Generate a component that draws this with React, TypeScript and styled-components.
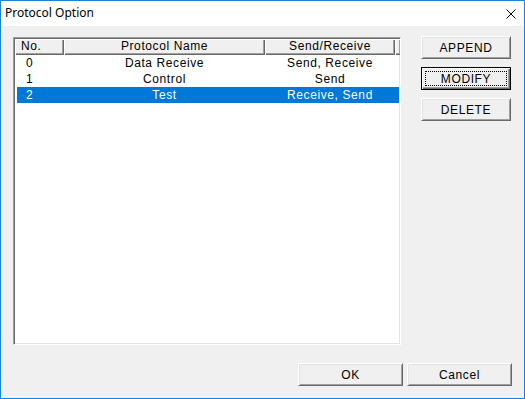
import React from 'react'
import styled, { createGlobalStyle } from 'styled-components'

const GlobalStyle = createGlobalStyle`
  html, body {
    margin: 0;
    padding: 0;
    background: #f0f0f0;
  }
`

const columns = [
  { key: 'no', title: 'No.', width: 49, align: 'left' },
  { key: 'name', title: 'Protocol Name', width: 201, align: 'center' },
  { key: 'dir', title: 'Send/Receive', width: 130, align: 'center' },
]

const rows = [
  { no: '0', name: 'Data Receive', dir: 'Send, Receive' },
  { no: '1', name: 'Control', dir: 'Send' },
  { no: '2', name: 'Test', dir: 'Receive, Send' },
]

const selectedRow = 2

const App = () => {
  return (
    <>
      <GlobalStyle />
      <Window>
        <TitleBar>
          <Title>Protocol Option</Title>
          <CloseIcon width="10" height="10" viewBox="0 0 10 10">
            <path d="M0.5 0.5 L9.5 9.5 M9.5 0.5 L0.5 9.5" stroke="#000" strokeWidth="1" />
          </CloseIcon>
        </TitleBar>
        <Body>
          <TopRow>
            <ListView>
              <Header>
                {columns.map((col) => (
                  <HeaderCell key={col.key} $width={col.width} $align={col.align}>
                    {col.title}
                  </HeaderCell>
                ))}
                <HeaderCell $width={6} $align="left" />
              </Header>
              <Rows>
                {rows.map((row, index) => (
                  <Row key={row.no} $selected={index === selectedRow}>
                    {columns.map((col, ci) => (
                      <Cell
                        key={col.key}
                        $width={ci === 0 ? col.width - 2 : col.width}
                        $align={col.align}
                      >
                        {row[col.key as keyof typeof row]}
                      </Cell>
                    ))}
                  </Row>
                ))}
              </Rows>
            </ListView>
            <SideButtons>
              <Button $width={90}>
                <Label>APPEND</Label>
              </Button>
              <Button $width={90} $default>
                <Label $focused>MODIFY</Label>
              </Button>
              <Button $width={90}>
                <Label>DELETE</Label>
              </Button>
            </SideButtons>
          </TopRow>
          <BottomRow>
            <Button $width={105}>
              <Label>OK</Label>
            </Button>
            <Button $width={105}>
              <Label>Cancel</Label>
            </Button>
          </BottomRow>
        </Body>
      </Window>
    </>
  )
}

const Window = styled.div`
  width: 525px;
  height: 399px;
  box-sizing: border-box;
  border: 1px solid #1883d7;
  background: #f0f0f0;
  display: flex;
  flex-direction: column;
  font-family: 'Liberation Sans', Arial, sans-serif;
  font-size: 12px;
  letter-spacing: 0.6px;
  color: #000;
`

const TitleBar = styled.div`
  height: 25px;
  flex: none;
  background: #fff;
  display: flex;
  align-items: center;
  justify-content: space-between;
  padding: 0 8px 0 4px;
`

const Title = styled.span`
  font-family: 'Noto Sans', 'Open Sans', sans-serif;
  font-size: 12px;
  letter-spacing: 0;
  color: #000;
  line-height: 1;
  margin-top: -1px;
`

const CloseIcon = styled.svg`
  display: block;
`

const Body = styled.div`
  flex: 1;
  display: flex;
  flex-direction: column;
  padding: 11px 12px 12px 12px;
`

const TopRow = styled.div`
  display: flex;
  gap: 20px;
  height: 308px;
`

const ListView = styled.div`
  width: 388px;
  height: 308px;
  box-sizing: border-box;
  background: #fff;
  border: 1px solid;
  border-color: #a0a0a0 #fff #fff #a0a0a0;
  box-shadow: inset 1px 1px #696969, inset -1px -1px #e3e3e3;
  padding: 1px;
  display: flex;
  flex-direction: column;
  overflow: hidden;
`

const Header = styled.div`
  display: flex;
  height: 16px;
  flex: none;
`

const HeaderCell = styled.div<{ $width: number; $align: string }>`
  width: ${({ $width }) => $width}px;
  flex: none;
  box-sizing: border-box;
  height: 16px;
  line-height: 15px;
  background: #f0f0f0;
  box-shadow: inset 1px 1px #fff, inset -1px -1px #696969, inset -2px -2px #a0a0a0;
  text-align: ${({ $align }) => $align};
  padding: 0 ${({ $align }) => ($align === 'left' ? '0 0 6px' : '0')};
  white-space: nowrap;
  overflow: hidden;
`

const Rows = styled.div`
  display: flex;
  flex-direction: column;
  padding-left: 2px;
`

const Row = styled.div<{ $selected?: boolean }>`
  display: flex;
  height: 16px;
  line-height: 16px;
  background: ${({ $selected }) => ($selected ? '#0078d7' : 'transparent')};
  color: ${({ $selected }) => ($selected ? '#fff' : '#000')};
`

const Cell = styled.div<{ $width: number; $align: string }>`
  width: ${({ $width }) => $width}px;
  flex: none;
  box-sizing: border-box;
  text-align: ${({ $align }) => $align};
  padding-left: ${({ $align }) => ($align === 'left' ? '9px' : '0')};
  white-space: nowrap;
`

const SideButtons = styled.div`
  display: flex;
  flex-direction: column;
  gap: 8px;
  margin-top: -1px;
`

const Button = styled.div<{ $width: number; $default?: boolean }>`
  width: ${({ $width }) => $width}px;
  height: 23px;
  box-sizing: border-box;
  background: #f0f0f0;
  display: flex;
  padding: 3px;
  border: 1px solid;
  border-color: ${({ $default }) =>
    $default ? '#000' : '#fff #696969 #696969 #fff'};
  box-shadow: ${({ $default }) =>
    $default
      ? 'inset 1px 1px #fff, inset -1px -1px #696969, inset -2px -2px #a0a0a0'
      : 'inset 1px 1px #e3e3e3, inset -1px -1px #a0a0a0'};
`

const Label = styled.span<{ $focused?: boolean }>`
  flex: 1;
  display: flex;
  align-items: center;
  justify-content: center;
  border: 1px dotted ${({ $focused }) => ($focused ? '#000' : 'transparent')};
  line-height: 1;
`

const BottomRow = styled.div`
  display: flex;
  justify-content: flex-end;
  gap: 4px;
  margin-top: 18px;
`

export default App
